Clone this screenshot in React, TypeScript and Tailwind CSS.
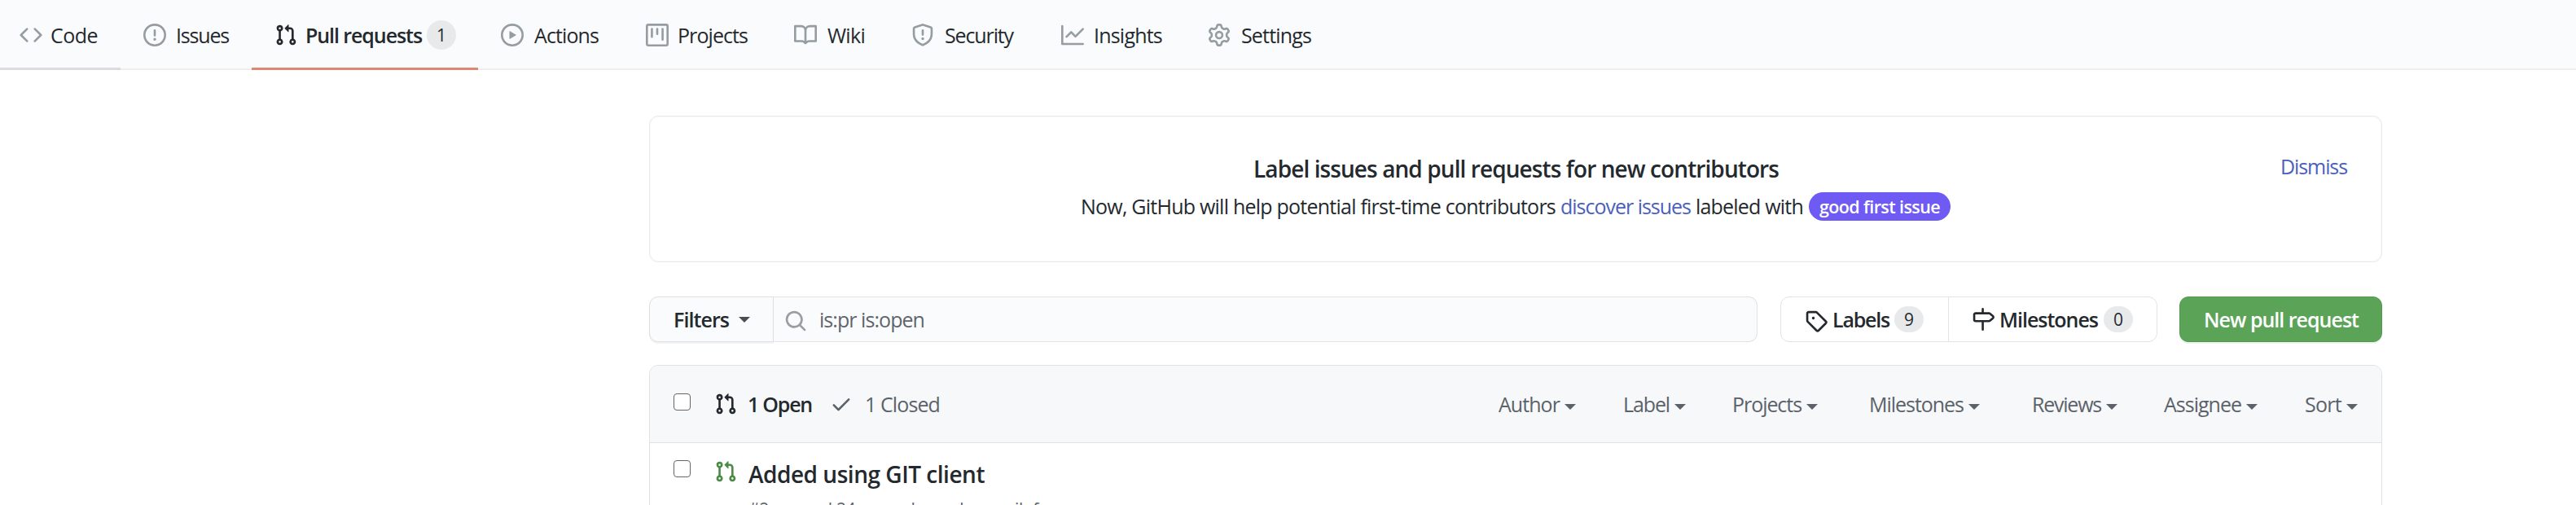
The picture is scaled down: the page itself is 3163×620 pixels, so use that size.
import React, { useLayoutEffect, useRef, useState } from "react";

const paths = {
  code: "M4.72 3.22a.75.75 0 011.06 1.06L2.06 8l3.72 3.72a.75.75 0 11-1.06 1.06L.47 8.53a.75.75 0 010-1.06l4.25-4.25zm6.56 0a.75.75 0 10-1.06 1.06L13.94 8l-3.72 3.72a.75.75 0 101.06 1.06l4.25-4.25a.75.75 0 000-1.06l-4.25-4.25z",
  issue: "M8 1.5a6.5 6.5 0 100 13 6.5 6.5 0 000-13zM0 8a8 8 0 1116 0A8 8 0 010 8zm9 3a1 1 0 11-2 0 1 1 0 012 0zm-.25-6.25a.75.75 0 00-1.5 0v3.5a.75.75 0 001.5 0v-3.5z",
  pull: "M7.177 3.073L9.573.677A.25.25 0 0110 .854v4.792a.25.25 0 01-.427.177L7.177 3.427a.25.25 0 010-.354zM3.75 2.5a.75.75 0 100 1.5.75.75 0 000-1.5zm-2.25.75a2.25 2.25 0 113 2.122v5.256a2.251 2.251 0 11-1.5 0V5.372A2.25 2.25 0 011.5 3.25zM11 2.5h-1V4h1a1 1 0 011 1v5.628a2.251 2.251 0 101.5 0V5A2.5 2.5 0 0011 2.5zm1 10.25a.75.75 0 111.5 0 .75.75 0 01-1.5 0zM3.75 12a.75.75 0 100 1.5.75.75 0 000-1.5z",
  play: "M1.5 8a6.5 6.5 0 1113 0 6.5 6.5 0 01-13 0zM8 0a8 8 0 100 16A8 8 0 008 0zM6.379 5.227A.25.25 0 006 5.442v5.117a.25.25 0 00.379.214l4.264-2.559a.25.25 0 000-.428L6.379 5.227z",
  project: "M1.75 0A1.75 1.75 0 000 1.75v12.5C0 15.216.784 16 1.75 16h12.5A1.75 1.75 0 0016 14.25V1.75A1.75 1.75 0 0014.25 0H1.75zM1.5 1.75a.25.25 0 01.25-.25h12.5a.25.25 0 01.25.25v12.5a.25.25 0 01-.25.25H1.75a.25.25 0 01-.25-.25V1.75zM11.75 3a.75.75 0 00-.75.75v7.5a.75.75 0 001.5 0v-7.5a.75.75 0 00-.75-.75zm-8.25.75a.75.75 0 011.5 0v5.5a.75.75 0 01-1.5 0v-5.5zM8 3a.75.75 0 00-.75.75v3.5a.75.75 0 001.5 0v-3.5A.75.75 0 008 3z",
  book: "M0 1.75A.75.75 0 01.75 1h4.253c1.227 0 2.317.59 3 1.501A3.744 3.744 0 0111.006 1h4.245a.75.75 0 01.75.75v10.5a.75.75 0 01-.75.75h-4.507a2.25 2.25 0 00-1.591.659l-.622.621a.75.75 0 01-1.06 0l-.622-.621A2.25 2.25 0 005.258 13H.75a.75.75 0 01-.75-.75V1.75zm8.755 3a2.25 2.25 0 012.25-2.25H14.5v9h-3.757c-.71 0-1.4.201-1.992.572l.004-7.322zm-1.504 7.324l.004-5.073-.002-2.253A2.25 2.25 0 005.003 2.5H1.5v9h3.757a3.75 3.75 0 011.994.574z",
  shield: "M7.467.133a1.75 1.75 0 011.066 0l5.25 1.68A1.75 1.75 0 0115 3.48V7c0 1.566-.32 3.182-1.303 4.682-.983 1.498-2.585 2.813-5.032 3.855a1.7 1.7 0 01-1.33 0c-2.447-1.042-4.049-2.357-5.032-3.855C1.32 10.182 1 8.566 1 7V3.48a1.75 1.75 0 011.217-1.667l5.25-1.68zm.61 1.429a.25.25 0 00-.153 0l-5.25 1.68a.25.25 0 00-.174.238V7c0 1.358.275 2.666 1.057 3.86.784 1.194 2.121 2.34 4.366 3.297a.2.2 0 00.154 0c2.245-.956 3.582-2.104 4.366-3.298C13.225 9.666 13.5 8.36 13.5 7V3.48a.25.25 0 00-.174-.237l-5.25-1.68zM9 10.5a1 1 0 11-2 0 1 1 0 012 0zm-.25-5.75a.75.75 0 10-1.5 0v3a.75.75 0 001.5 0v-3z",
  graph: "M1.5 1.75a.75.75 0 00-1.5 0v12.5c0 .414.336.75.75.75h14.5a.75.75 0 000-1.5H1.5V1.75zm14.28 2.53a.75.75 0 00-1.06-1.06L10 7.94 7.53 5.47a.75.75 0 00-1.06 0L3.22 8.72a.75.75 0 001.06 1.06L7 7.06l2.47 2.47a.75.75 0 001.06 0l5.25-5.25z",
  gear: "M7.429 1.525a6.593 6.593 0 011.142 0c.036.003.108.036.137.146l.289 1.105c.147.56.55.967.997 1.189.174.086.341.183.501.29.417.278.97.423 1.53.27l1.102-.303c.11-.03.175.016.195.046.219.31.41.641.573.989.014.031.022.11-.059.19l-.815.806c-.411.406-.562.957-.53 1.456a4.588 4.588 0 010 .582c-.032.499.119 1.05.53 1.456l.815.806c.08.08.073.159.059.19a6.494 6.494 0 01-.573.99c-.02.029-.086.074-.195.045l-1.103-.303c-.559-.153-1.112-.008-1.529.27-.16.107-.327.204-.5.29-.449.222-.851.628-.998 1.189l-.289 1.105c-.029.11-.101.143-.137.146a6.613 6.613 0 01-1.142 0c-.036-.003-.108-.037-.137-.146l-.289-1.105c-.147-.56-.55-.967-.997-1.189a4.502 4.502 0 01-.501-.29c-.417-.278-.97-.423-1.53-.27l-1.102.303c-.11.03-.175-.016-.195-.046a6.492 6.492 0 01-.573-.989c-.014-.031-.022-.11.059-.19l.815-.806c.411-.406.562-.957.53-1.456a4.587 4.587 0 010-.582c.032-.499-.119-1.05-.53-1.456l-.815-.806c-.08-.08-.073-.159-.059-.19a6.44 6.44 0 01.573-.99c.02-.029.086-.075.195-.045l1.103.303c.559.153 1.112.008 1.529-.27.16-.107.327-.204.5-.29.449-.222.851-.628.998-1.189l.289-1.105c.029-.11.101-.143.137-.146zM8 0c-.236 0-.47.01-.701.03-.743.065-1.29.615-1.458 1.261l-.29 1.106c-.017.066-.078.158-.211.224a5.994 5.994 0 00-.668.386c-.123.082-.233.09-.3.071L3.27 2.776c-.644-.177-1.392.02-1.82.63a7.977 7.977 0 00-.704 1.217c-.315.675-.111 1.422.363 1.891l.815.806c.05.048.098.147.088.294a6.084 6.084 0 000 .772c.01.147-.038.246-.088.294l-.815.806c-.474.469-.678 1.216-.363 1.891.2.428.436.835.704 1.218.428.609 1.176.806 1.82.63l1.103-.303c.066-.019.176-.011.299.071.213.143.436.272.668.386.133.066.194.158.212.224l.289 1.106c.169.646.715 1.196 1.458 1.26a8.094 8.094 0 001.402 0c.743-.064 1.29-.614 1.458-1.26l.29-1.106c.017-.066.078-.158.211-.224a5.98 5.98 0 00.668-.386c.123-.082.233-.09.3-.071l1.102.302c.644.177 1.392-.02 1.82-.63.268-.382.505-.789.704-1.217.315-.675.111-1.422-.364-1.891l-.814-.806c-.05-.048-.098-.147-.088-.294a6.1 6.1 0 000-.772c-.01-.147.039-.246.088-.294l.814-.806c.475-.469.679-1.216.364-1.891a7.992 7.992 0 00-.704-1.218c-.428-.609-1.176-.806-1.82-.63l-1.103.303c-.066.019-.176.011-.299-.071a5.991 5.991 0 00-.668-.386c-.133-.066-.194-.158-.212-.224L10.16 1.29C9.99.645 9.444.095 8.701.031A8.094 8.094 0 008 0zm1.5 8a1.5 1.5 0 11-3 0 1.5 1.5 0 013 0zM11 8a3 3 0 11-6 0 3 3 0 016 0z",
  search: "M11.5 7a4.499 4.499 0 11-8.998 0A4.499 4.499 0 0111.5 7zm-.82 4.74a6 6 0 111.06-1.06l3.04 3.04a.75.75 0 11-1.06 1.06l-3.04-3.04z",
  tag: "M2.5 7.775V2.75a.25.25 0 01.25-.25h5.025a.25.25 0 01.177.073l6.25 6.25a.25.25 0 010 .354l-5.025 5.025a.25.25 0 01-.354 0l-6.25-6.25a.25.25 0 01-.073-.177zm-1.5 0V2.75C1 1.784 1.784 1 2.75 1h5.025c.464 0 .91.184 1.238.513l6.25 6.25a1.75 1.75 0 010 2.474l-5.026 5.026a1.75 1.75 0 01-2.474 0l-6.25-6.25A1.75 1.75 0 011 7.775zM6 5a1 1 0 100 2 1 1 0 000-2z",
  milestone: "M7.75 0a.75.75 0 01.75.75V3h3.634c.414 0 .814.147 1.13.414l2.07 1.75a1.75 1.75 0 010 2.672l-2.07 1.75a1.75 1.75 0 01-1.13.414H8.5v5.25a.75.75 0 11-1.5 0V10H2.75A1.75 1.75 0 011 8.25v-3.5C1 3.784 1.784 3 2.75 3H7V.75A.75.75 0 017.75 0zm0 8.5h4.384a.25.25 0 00.161-.06l2.07-1.75a.25.25 0 000-.38l-2.07-1.75a.25.25 0 00-.161-.06H2.75a.25.25 0 00-.25.25v3.5c0 .138.112.25.25.25h5z",
  check: "M13.78 4.22a.75.75 0 010 1.06l-7.25 7.25a.75.75 0 01-1.06 0L2.22 9.28a.75.75 0 011.06-1.06L6 10.94l6.72-6.72a.75.75 0 011.06 0z",
};

type IconName = keyof typeof paths;

function Icon({ name, className = "" }: { name: IconName; className?: string }) {
  return (
    <svg viewBox="0 0 16 16" className={`size-7 shrink-0 fill-current ${className}`}>
      <path fillRule="evenodd" d={paths[name]} />
    </svg>
  );
}

/* Tracks its text so that it takes up exactly the given width. */
function Text({ w, children, className = "" }: { w: number; children: string; className?: string }) {
  const ref = useRef<HTMLSpanElement>(null);
  const [spacing, setSpacing] = useState(0);
  useLayoutEffect(() => {
    if (!ref.current) return;
    ref.current.style.letterSpacing = "0px";
    setSpacing((w - ref.current.getBoundingClientRect().width) / children.length);
  }, [w, children]);
  return (
    <span ref={ref} className={`shrink-0 whitespace-pre ${className}`} style={{ letterSpacing: `${spacing}px` }}>
      {children}
    </span>
  );
}

function Caret({ className = "" }: { className?: string }) {
  return (
    <svg viewBox="0 0 14 7" className={`h-[7px] w-3.5 shrink-0 fill-current ${className}`}>
      <path d="M0 0h14L7 7z" />
    </svg>
  );
}

function Counter({ children, className = "" }: { children: string; className?: string }) {
  return (
    <span className={`flex w-9 shrink-0 items-center justify-center rounded-full bg-[#e8e9eb] text-[21px] ${className}`}>
      {children}
    </span>
  );
}

function Checkbox({ className = "" }: { className?: string }) {
  return <span className={`size-[21px] shrink-0 rounded-[4px] border-[1.5px] border-[#666] bg-white ${className}`} />;
}

const tabs: { icon: IconName; label: string; w: number; lead: string; gap: string }[] = [
  { icon: "play", label: "Actions", w: 79, lead: "ml-7", gap: "ml-[13px]" },
  { icon: "project", label: "Projects", w: 86, lead: "ml-[58px]", gap: "ml-[11px]" },
  { icon: "book", label: "Wiki", w: 46, lead: "ml-[57px]", gap: "ml-[13px]" },
  { icon: "shield", label: "Security", w: 84, lead: "ml-[57px]", gap: "ml-[13px]" },
  { icon: "graph", label: "Insights", w: 84, lead: "ml-[59px]", gap: "ml-[12px]" },
  { icon: "gear", label: "Settings", w: 86, lead: "ml-[56px]", gap: "ml-[13px]" },
];

const menus = [
  { label: "Author", w: 75, cell: "w-[153px]" },
  { label: "Label", w: 57, cell: "w-[134px]" },
  { label: "Projects", w: 85, cell: "w-[168px]" },
  { label: "Milestones", w: 116, cell: "w-[200px]" },
  { label: "Reviews", w: 85, cell: "w-[162px]" },
  { label: "Assignee", w: 95, cell: "w-[173px]" },
  { label: "Sort", w: 45, cell: "w-[94px]" },
];

function NavBar() {
  return (
    <nav className="flex h-[86px] items-stretch bg-[#fafbfc] shadow-[inset_0_-2px_0_#eeeeef]">
      <div className="flex w-[148px] items-center border-b-[3px] border-[#dcdce0] pt-[3px] pl-6">
        <Icon name="code" className="text-[#959da1]" />
        <Text w={58} className="ml-2.5">Code</Text>
      </div>
      <div className="flex w-[161px] items-center pl-7">
        <Icon name="issue" className="text-[#959da1]" />
        <Text w={65} className="ml-[12px]">Issues</Text>
      </div>
      <div className="flex w-[278px] items-center border-b-[3px] border-[#dc8874] pt-[3px] pl-7">
        <Icon name="pull" />
        <Text w={143} className="ml-[10px] font-semibold">Pull requests</Text>
        <Counter className="ml-1.5 h-9">1</Counter>
      </div>
      {tabs.map((t) => (
        <div key={t.label} className={`flex items-center ${t.lead}`}>
          <Icon name={t.icon} className="text-[#959da1]" />
          <Text w={t.w} className={t.gap}>{t.label}</Text>
        </div>
      ))}
    </nav>
  );
}

function Banner() {
  return (
    <section className="flex h-[180px] rounded-[11px] border border-[#e8eaec] shadow-[inset_0_0_0_1px_#f8f8f9]">
      <div className="flex grow flex-col pl-[529px]">
        <Text w={645} className="mt-[44px] ml-[212px] self-start text-[28px] leading-[40px] font-semibold">
          Label issues and pull requests for new contributors
        </Text>
        <div className="mt-[8px] flex h-9 items-center">
          <Text w={583}>Now, GitHub will help potential first-time contributors</Text>
          <Text w={160} className="ml-[6px] text-[#4c5fbd]">discover issues</Text>
          <Text w={132} className="ml-[6px]">labeled with</Text>
          <span className="ml-[7px] flex h-[35px] w-[174px] items-center justify-center rounded-full bg-[#6f5bf4] pt-[1px] text-[21.5px] font-semibold text-white">
            <Text w={148}>good first issue</Text>
          </span>
        </div>
      </div>
      <Text w={82} className="mt-[43px] mr-[42px] leading-9 text-[#4c5fbd]">Dismiss</Text>
    </section>
  );
}

function Toolbar() {
  return (
    <div className="mt-[42px] flex h-14">
      <div className="flex w-[153px] items-center rounded-l-[11px] border-[1.5px] border-[#dddfe2] bg-[#fafbfc] pl-[29px] shadow-[0_2px_0_#f2f3f4]">
        <Text w={68} className="font-semibold">Filters</Text>
        <Caret className="ml-3 text-[#4a4e53]" />
      </div>
      <div className="flex w-[1208px] items-center rounded-r-[11px] border-[1.5px] border-l-0 border-[#e1e3e6] bg-[#fafbfc] pl-[13px] text-[#5f656c]">
        <Icon name="search" className="mt-1 text-[#9a9da1]" />
        <Text w={129} className="ml-[15px]">is:pr is:open</Text>
      </div>
      <div className="ml-7 flex w-[463px] items-stretch rounded-[11px] border-[1.5px] border-[#e1e3e6]">
        <div className="flex w-[206px] items-center border-r-[1.5px] border-[#e1e3e6] pl-[29px]">
          <Icon name="tag" className="mt-1" />
          <Text w={70} className="ml-1.5 font-semibold">Labels</Text>
          <Counter className="ml-[6px] h-8">9</Counter>
        </div>
        <div className="flex items-center pl-[28px]">
          <Icon name="milestone" />
          <Text w={121} className="ml-[6px] font-semibold">Milestones</Text>
          <Counter className="ml-[7px] h-8">0</Counter>
        </div>
      </div>
      <div className="ml-[27px] flex w-[249px] items-center justify-center rounded-[11px] border-[1.5px] border-[#539a50] bg-[#5ba457] pl-px font-semibold text-white shadow-[0_2px_0_#eef4ee]">
        <Text w={190}>New pull request</Text>
      </div>
    </div>
  );
}

function PullList() {
  return (
    <section className="mt-7 h-[300px] rounded-t-[11px] border-[1.5px] border-[#dfe2e5]">
      <header className="flex h-[95px] items-center rounded-t-[10px] border-b-[1.5px] border-[#dfe2e5] bg-[#f6f8fa] pl-[29px] text-[#5c6269]">
        <Checkbox className="-mt-[5px]" />
        <Icon name="pull" className="ml-[29px] text-[#24292e]" />
        <Text w={79} className="ml-[13px] font-semibold text-[#24292e]">1 Open</Text>
        <Icon name="check" className="ml-[22px]" />
        <Text w={92} className="ml-[15px]">1 Closed</Text>
        <div className="ml-auto flex">
          {menus.map((m) => (
            <div key={m.label} className={`flex items-center ${m.cell}`}>
              <Text w={m.w}>{m.label}</Text>
              <Caret className="mt-1.5 ml-[6px]" />
            </div>
          ))}
        </div>
      </header>
      <div className="flex pt-[21px] pl-[29px]">
        <Checkbox />
        <Icon name="pull" className="ml-[29px] text-[#4b8b45]" />
        <div className="-mt-[3px] ml-[14px] flex flex-col items-start">
          <Text w={290} className="text-[28px] leading-[40px] font-semibold">Added using GIT client</Text>
          <Text w={356} className="mt-[9px] text-[21px] leading-[28px] text-[#5c6269]">#2 opened 24 seconds ago by smailof</Text>
        </div>
      </div>
    </section>
  );
}

export default function App() {
  return (
    <div className="h-[620px] w-[3163px] overflow-hidden bg-white font-['Open_Sans',sans-serif] text-[25px] leading-none text-[#24292e]">
      <NavBar />
      <main className="mt-14 ml-[797px] w-[2128px]">
        <Banner />
        <Toolbar />
        <PullList />
      </main>
    </div>
  );
}
